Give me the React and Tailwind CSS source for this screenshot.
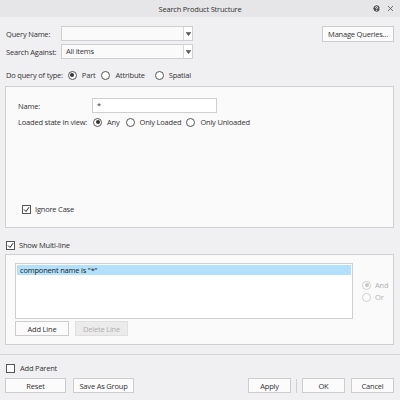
import { HelpCircle, X } from 'lucide-react';

const font = { fontFamily: '"Open Sans", "Noto Sans", sans-serif' };

function Radio({ checked, disabled }) {
  return (
    <span
      className={`inline-flex shrink-0 items-center justify-center w-[9px] h-[9px] rounded-full border bg-white ${
        disabled ? 'border-[#cfcfcf]' : 'border-[#555]'
      }`}
    >
      {checked && <span className={`w-[4px] h-[4px] rounded-full ${disabled ? 'bg-[#c8c8c8]' : 'bg-[#333]'}`} />}
    </span>
  );
}

function Check({ checked }) {
  return (
    <span className="inline-flex shrink-0 items-center justify-center w-[9px] h-[9px] border border-[#555] bg-white">
      {checked && (
        <svg width="7" height="7" viewBox="0 0 7 7">
          <path d="M1 3.5 L3 5.5 L6 1.2" stroke="#222" strokeWidth="1" fill="none" />
        </svg>
      )}
    </span>
  );
}

function Combo({ value }) {
  return (
    <div className="flex w-[132px] h-[15px] border border-[#cfcfcf] bg-white">
      <div className="flex-1 px-[4px] leading-[13px] text-[#333] bg-[#fafafa]">{value}</div>
      <div className="w-[9px] border-l border-[#d8d8d8] flex items-center justify-center">
        <svg width="5" height="4" viewBox="0 0 5 4">
          <path d="M0 0.5 H5 M0.8 1.5 L4.2 1.5 L2.5 3.5 Z" stroke="#555" strokeWidth="0.8" fill="#555" />
        </svg>
      </div>
    </div>
  );
}

function Btn({ children, className = '', disabled }) {
  return (
    <div
      className={`flex items-center justify-center h-[15px] border ${
        disabled ? 'border-[#e0e0e0] bg-[#ebebeb] text-[#b0b0b0]' : 'border-[#cdcdcd] bg-[#fbfbfb] text-[#333]'
      } ${className}`}
    >
      {children}
    </div>
  );
}

export default function App() {
  return (
    <div
      className="w-[400px] h-[400px] bg-[#f0f0f2] text-[7.5px] leading-[12px] tracking-[-0.2px] whitespace-nowrap text-[#333] overflow-hidden"
      style={font}
    >
      {/* Title bar */}
      <div className="relative h-[17px] bg-[#e6e6e8] flex items-center justify-center text-[#333]">
        Search Product Structure
        <div className="absolute right-[5px] top-[4px] flex items-center gap-[5px]">
          <HelpCircle size={9} color="#fff" fill="#555" strokeWidth={2.5} />
          <X size={9} color="#444" strokeWidth={2} />
        </div>
      </div>

      <div className="px-[5px] pt-[9px]">
        {/* Query Name */}
        <div className="flex items-center h-[15px]">
          <div className="w-[56px] pl-[1px]">Query Name:</div>
          <Combo value="" />
          <div className="flex-1" />
          <Btn className="w-[72px] h-[16px] mr-[1px]">Manage Queries...</Btn>
        </div>
        <div className="flex items-center h-[15px] mt-[3px]">
          <div className="w-[56px] pl-[1px]">Search Against:</div>
          <Combo value="All items" />
        </div>

        {/* Query type */}
        <div className="flex items-center h-[12px] mt-[10px] pl-[1px]">
          <span className="mr-[5px]">Do query of type:</span>
          <Radio checked />
          <span className="ml-[5px] mr-[6px]">Part</span>
          <Radio />
          <span className="ml-[5px] mr-[10px]">Attribute</span>
          <Radio />
          <span className="ml-[5px]">Spatial</span>
        </div>

        {/* Main box */}
        <div className="mt-[5px] h-[142px] border border-[#cfcfcf] bg-[#fafafa] flex flex-col px-[12px] pt-[11px] pb-[12px] w-[389px]">
          <div className="flex items-center h-[15px]">
            <div className="w-[74px]">Name:</div>
            <div className="w-[125px] h-[15px] border border-[#cfcfcf] bg-white px-[4px] leading-[12px]">*</div>
          </div>
          <div className="flex items-center h-[12px] mt-[3px]">
            <span className="mr-[6px]">Loaded state in view:</span>
            <Radio checked />
            <span className="ml-[5px] mr-[6px]">Any</span>
            <Radio />
            <span className="ml-[5px] mr-[5px]">Only Loaded</span>
            <Radio />
            <span className="ml-[5px]">Only Unloaded</span>
          </div>
          <div className="flex-1" />
          <div className="flex items-center ml-[4px]">
            <Check checked />
            <span className="ml-[4px]">Ignore Case</span>
          </div>
        </div>

        {/* Show multi-line */}
        <div className="flex items-center h-[12px] mt-[11px] ml-[1px]">
          <Check checked />
          <span className="ml-[4px]">Show Multi-line</span>
        </div>

        <div className="mt-[3px] h-[91px] w-[389px] border border-[#cfcfcf] bg-[#fafafa] px-[9px] pt-[8px] flex">
          <div className="flex flex-col">
            <div className="w-[338px] h-[56px] border border-[#cfcfcf] bg-white p-[1px]">
              <div className="h-[10px] bg-[#b3e0fa] px-[3px] leading-[10px] text-[#222]">component name is "*"</div>
            </div>
            <div className="flex gap-[6px] mt-[2px]">
              <Btn className="w-[54px]">Add Line</Btn>
              <Btn className="w-[53px]" disabled>Delete Line</Btn>
            </div>
          </div>
          <div className="ml-[9px] mt-[17px] flex flex-col gap-[2px] text-[#b0b0b0] leading-[10px]">
            <div className="flex items-center">
              <Radio checked disabled />
              <span className="ml-[4px]">And</span>
            </div>
            <div className="flex items-center">
              <Radio disabled />
              <span className="ml-[4px]">Or</span>
            </div>
          </div>
        </div>
      </div>

      {/* Separator */}
      <div className="mt-[9px] h-px bg-[#d6d6d6]" />

      <div className="px-[5px]">
        <div className="flex items-center h-[12px] mt-[7px] ml-[1px]">
          <Check />
          <span className="ml-[5px]">Add Parent</span>
        </div>
        <div className="flex items-center mt-[4px]">
          <Btn className="w-[61px] h-[15px]">Reset</Btn>
          <Btn className="w-[61px] h-[15px] ml-[7px]">Save As Group</Btn>
          <div className="flex-1" />
          <Btn className="w-[43px] h-[15px]">Apply</Btn>
          <div className="w-px h-[14px] bg-[#d0d0d0] mx-[5px]" />
          <Btn className="w-[43px] h-[15px]">OK</Btn>
          <Btn className="w-[43px] h-[15px] ml-[6px] mr-[1px]">Cancel</Btn>
        </div>
      </div>
    </div>
  );
}
